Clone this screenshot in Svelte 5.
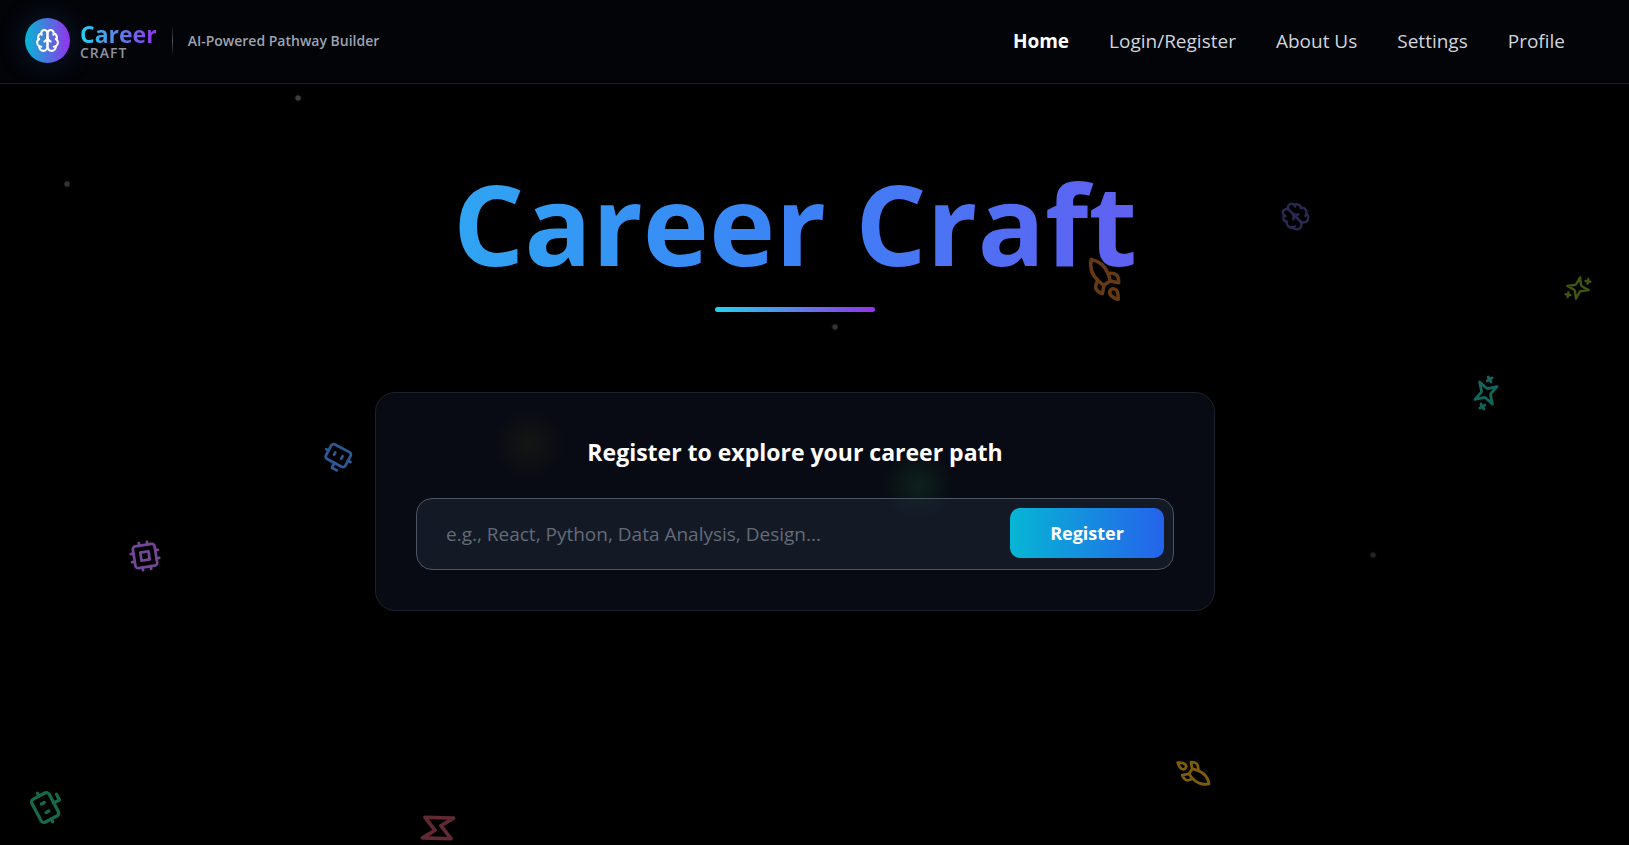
<script lang="ts">
  const links = ['Home', 'Login/Register', 'About Us', 'Settings', 'Profile'];

  const shapes: Record<string, string[]> = {
    brain: [
      'M12 5a3 3 0 1 0-5.997.125 4 4 0 0 0-2.526 5.77 4 4 0 0 0 .556 6.588A4 4 0 1 0 12 18Z',
      'M12 5a3 3 0 1 1 5.997.125 4 4 0 0 1 2.526 5.77 4 4 0 0 1-.556 6.588A4 4 0 1 1 12 18Z',
      'M15 13a4.5 4.5 0 0 1-3-4 4.5 4.5 0 0 1-3 4',
      'M17.599 6.5a3 3 0 0 0 .399-1.375',
      'M6.003 5.125A3 3 0 0 0 6.401 6.5',
      'M3.477 10.896a4 4 0 0 1 .585-.396',
      'M19.938 10.5a4 4 0 0 1 .585.396',
      'M6 18a4 4 0 0 1-1.967-.516',
      'M19.967 17.484A4 4 0 0 1 18 18'
    ],
    rocket: [
      'M4.5 16.5c-1.5 1.26-2 5-2 5s3.74-.5 5-2c.71-.84.7-2.13-.09-2.91a2.18 2.18 0 0 0-2.91-.09z',
      'm12 15-3-3a22 22 0 0 1 2-3.95A12.88 12.88 0 0 1 22 2c0 2.72-.78 7.5-6 11a22.35 22.35 0 0 1-4 2z',
      'M9 12H4s.55-3.03 2-4c1.62-1.08 5 0 5 0',
      'M12 15v5s3.03-.55 4-2c1.08-1.62 0-5 0-5'
    ],
    sparkles: [
      'm12 3-1.912 5.813a2 2 0 0 1-1.275 1.275L3 12l5.813 1.912a2 2 0 0 1 1.275 1.275L12 21l1.912-5.813a2 2 0 0 1 1.275-1.275L21 12l-5.813-1.912a2 2 0 0 1-1.275-1.275L12 3Z',
      'M5 3v4',
      'M19 17v4',
      'M3 5h4',
      'M17 19h4'
    ],
    bot: [
      'M12 8V4H8',
      'M6 8h12a2 2 0 0 1 2 2v8a2 2 0 0 1-2 2H6a2 2 0 0 1-2-2v-8a2 2 0 0 1 2-2z',
      'M2 14h2',
      'M20 14h2',
      'M15 13v2',
      'M9 13v2'
    ],
    cpu: [
      'M6 4h12a2 2 0 0 1 2 2v12a2 2 0 0 1-2 2H6a2 2 0 0 1-2-2V6a2 2 0 0 1 2-2z',
      'M9 9h6v6H9z',
      'M15 2v2',
      'M15 20v2',
      'M2 15h2',
      'M2 9h2',
      'M20 15h2',
      'M20 9h2',
      'M9 2v2',
      'M9 20v2'
    ],
    zap: ['M13 2 3 14h9l-1 8 10-12h-9l1-8z']
  };

  // Free-floating decorations: x and y are the centre of each icon.
  const floats = [
    { icon: 'rocket', x: 1105, y: 280, size: 42, turn: -79, color: '#663a16' },
    { icon: 'brain', x: 1295, y: 216, size: 29, turn: -45, color: '#292a52' },
    { icon: 'sparkles', x: 1578, y: 288, size: 29, turn: 101, color: '#405514' },
    { icon: 'sparkles', x: 1486, y: 393, size: 34, turn: 60, color: '#14665d' },
    { icon: 'bot', x: 337, y: 458, size: 33, turn: 208, color: '#2d5a94' },
    { icon: 'cpu', x: 145, y: 556, size: 33, turn: -9, color: '#734796' },
    { icon: 'bot', x: 48, y: 806, size: 39, turn: 62, color: '#17694a' },
    { icon: 'zap', x: 438, y: 828, size: 44, turn: -128, color: '#612a32' },
    { icon: 'rocket', x: 1193, y: 773, size: 33, turn: 79, color: '#7d5c10' }
  ];

  const dots = [
    { x: 298, y: 98, color: '#3b3d42' },
    { x: 67, y: 184, color: '#33353a' },
    { x: 835, y: 327, color: '#323438' },
    { x: 1373, y: 555, color: '#232528' }
  ];

  let skills = $state('');
</script>

{#snippet glyph(name: string)}
  <svg viewBox="0 0 24 24" aria-hidden="true">
    {#each shapes[name] as d}
      <path {d} />
    {/each}
  </svg>
{/snippet}

<div class="page">
  <header>
    <div class="brand">
      <span class="mark">{@render glyph('brain')}</span>
      <div class="name">
        <span class="first">Career</span>
        <span class="second">CRAFT</span>
      </div>
      <span class="rule"></span>
      <span class="tagline">AI-Powered Pathway Builder</span>
    </div>
    <nav>
      {#each links as link, i}
        <a href="#top" class:active={i === 0}>{link}</a>
      {/each}
    </nav>
  </header>

  <main>
    <h1>Career Craft</h1>
    <div class="underline"></div>

    <section class="card">
      <div class="glow amber"></div>
      <div class="glow green"></div>
      <h2><label for="skills">Register to explore your career path</label></h2>
      <form class="field" onsubmit={(e) => e.preventDefault()}>
        <input
          id="skills"
          type="text"
          placeholder="e.g., React, Python, Data Analysis, Design..."
          bind:value={skills}
        />
        <button type="submit">Register</button>
      </form>
    </section>
  </main>

  <div class="sky" aria-hidden="true">
    {#each dots as dot}
      <span class="dot" style="left: {dot.x}px; top: {dot.y}px; color: {dot.color}"></span>
    {/each}
    {#each floats as f}
      <span
        class="float"
        style="left: {f.x}px; top: {f.y}px; width: {f.size}px; height: {f.size}px; color: {f.color}; --turn: {f.turn}deg"
      >
        {@render glyph(f.icon)}
      </span>
    {/each}
  </div>
</div>

<style>
  :global(body) {
    background: #000;
  }

  .page {
    position: relative;
    min-height: 100vh;
    overflow: hidden;
    background: #000;
    color: #fff;
    font-family: 'Segoe UI', 'Open Sans', 'Noto Sans', sans-serif;
  }

  svg {
    display: block;
    width: 100%;
    height: 100%;
    fill: none;
    stroke: currentColor;
    stroke-width: 2;
    stroke-linecap: round;
    stroke-linejoin: round;
  }

  header {
    display: flex;
    align-items: center;
    justify-content: space-between;
    padding: 18px 64px 20px 25px;
    border-bottom: 1px solid #1b1e24;
    background: #030408;
  }

  .brand {
    display: flex;
    align-items: center;
  }

  .mark {
    display: grid;
    place-items: center;
    width: 45px;
    height: 45px;
    margin-right: 10px;
    border-radius: 50%;
    background: linear-gradient(90deg, #06b6d4, #9333ea);
    box-shadow: 0 0 30px rgba(59, 130, 246, 0.2);
  }

  .mark svg {
    width: 25px;
    height: 25px;
  }

  .name {
    display: flex;
    flex-direction: column;
    align-items: flex-start;
  }

  .first {
    background: linear-gradient(90deg, #22d3ee, #9333ea);
    background-clip: text;
    color: transparent;
    font-size: 23px;
    font-weight: 700;
    line-height: 24px;
  }

  .second {
    color: #8d939f;
    font-size: 14px;
    font-weight: 600;
    letter-spacing: 1px;
    line-height: 14px;
  }

  .rule {
    width: 1px;
    height: 30px;
    margin: 0 15px;
    background: linear-gradient(180deg, transparent, #4b5563, transparent);
  }

  .tagline {
    color: #9ca3af;
    font-size: 14px;
    font-weight: 600;
    line-height: 20px;
  }

  nav {
    display: flex;
    gap: 40px;
  }

  nav a {
    color: #d1d5db;
    font-size: 19px;
    line-height: 28px;
    text-decoration: none;
  }

  nav a.active {
    color: #fff;
    font-weight: 700;
  }

  main {
    display: flex;
    flex-direction: column;
    align-items: center;
    padding: 63px 39px 64px 0;
  }

  h1 {
    width: 100%;
    margin: 0;
    background: linear-gradient(90deg, #22d3ee, #3b82f6, #9333ea);
    background-clip: text;
    color: transparent;
    font-size: 112px;
    font-weight: 700;
    line-height: 152px;
    text-align: center;
  }

  .underline {
    width: 160px;
    height: 5px;
    margin: 8px 0 80px;
    border-radius: 3px;
    background: linear-gradient(90deg, #22d3ee, #9333ea);
  }

  .card {
    position: relative;
    box-sizing: border-box;
    width: 100%;
    max-width: 840px;
    padding: 40px;
    border: 1px solid #1c212c;
    border-radius: 20px;
    background: #080b13;
  }

  .glow {
    position: absolute;
    width: 72px;
    height: 72px;
    border-radius: 50%;
  }

  .amber {
    left: 117px;
    top: 15px;
    background: radial-gradient(closest-side, #141513, transparent);
  }

  .green {
    left: 506px;
    top: 56px;
    background: radial-gradient(closest-side, #0e211c, transparent);
  }

  h2 {
    position: relative;
    margin: 0 0 27px;
    font-size: 23px;
    font-weight: 700;
    line-height: 38px;
    text-align: center;
  }

  .field {
    position: relative;
    display: flex;
    align-items: flex-start;
    padding: 9px 9px 11px;
    border: 1px solid #4b5563;
    border-radius: 16px;
    background: rgba(31, 41, 55, 0.52);
  }

  input {
    flex: 1;
    min-width: 0;
    height: 50px;
    padding: 2px 20px 0;
    box-sizing: border-box;
    border: 0;
    outline: 0;
    background: transparent;
    color: #fff;
    font: inherit;
    font-size: 19px;
  }

  input::placeholder {
    color: #646b77;
    opacity: 1;
  }

  button {
    width: 154px;
    height: 50px;
    border: 0;
    border-radius: 10px;
    background: linear-gradient(90deg, #06b6d4, #2563eb);
    color: #fff;
    font: inherit;
    font-size: 18px;
    font-weight: 700;
  }

  .sky {
    position: absolute;
    inset: 0;
    pointer-events: none;
  }

  .dot,
  .float {
    position: absolute;
    transform: translate(-50%, -50%) rotate(var(--turn, 0deg));
  }

  .dot {
    width: 5px;
    height: 5px;
    border-radius: 50%;
    background: currentColor;
    box-shadow: 0 0 2px currentColor;
  }
</style>
